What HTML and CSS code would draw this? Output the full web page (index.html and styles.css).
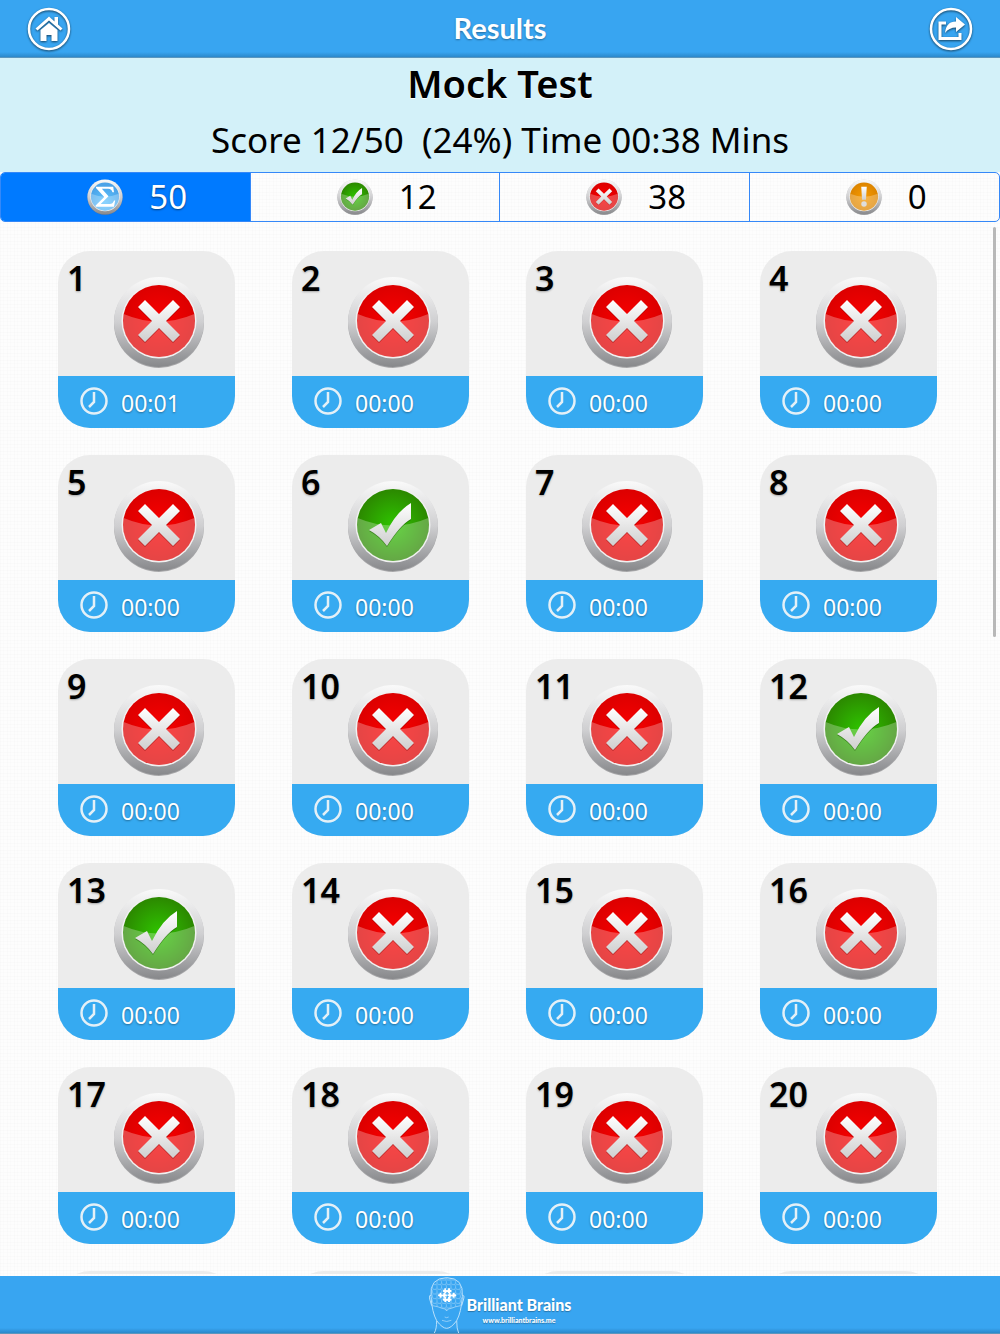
FILE: index.html
```html
<!DOCTYPE html>
<html lang="en">
<head>
    <meta charset="UTF-8">
    <meta name="viewport" content="width=device-width, initial-scale=1">
    <title>Results</title>
    <link rel="stylesheet" href="styles.css">
    <script src="results.js" defer></script>
</head>
<body>
    <!-- shared icons -->
    <svg class="defs" width="0" height="0" aria-hidden="true">
        <defs>
            <linearGradient id="ring" x1="0" y1="0" x2="0" y2="1">
                <stop offset="0" stop-color="#fafafa"/>
                <stop offset=".5" stop-color="#cfcfd1"/>
                <stop offset="1" stop-color="#87888b"/>
            </linearGradient>
            <linearGradient id="mark" x1="0" y1="0" x2="0" y2="1">
                <stop offset="0" stop-color="#ffffff"/>
                <stop offset="1" stop-color="#cfcfcf"/>
            </linearGradient>
            <radialGradient id="redTop" cx=".5" cy=".5" r=".55">
                <stop offset="0" stop-color="#fa0000"/>
                <stop offset="1" stop-color="#d90000"/>
            </radialGradient>
            <radialGradient id="greenTop" cx=".5" cy=".5" r=".55">
                <stop offset="0" stop-color="#2fc400"/>
                <stop offset="1" stop-color="#2b8200"/>
            </radialGradient>
            <radialGradient id="orangeTop" cx=".5" cy=".5" r=".55">
                <stop offset="0" stop-color="#f79a00"/>
                <stop offset="1" stop-color="#d98200"/>
            </radialGradient>
            <radialGradient id="blueTop" cx=".5" cy=".7" r=".6">
                <stop offset="0" stop-color="#5fc4ff"/>
                <stop offset="1" stop-color="#4ba3e8"/>
            </radialGradient>
        </defs>
        <symbol id="base" viewBox="0 0 92 92">
            <circle cx="46" cy="47" r="45" fill="#6d6e71" opacity=".55"/>
            <circle cx="46" cy="46" r="45" fill="url(#ring)"/>
            <circle cx="46" cy="45" r="37.500" fill="#f1f1f1"/>
        </symbol>
        <symbol id="gloss" viewBox="0 0 92 92">
            <path d="M10.700 38Q46 53 81.300 38A36 36 0 1 1 10.700 38Z" fill="#fff" opacity=".27"/>
        </symbol>
        <symbol id="wrong" viewBox="0 0 92 92">
            <use href="#base"/>
            <circle cx="46" cy="45" r="36" fill="url(#redTop)"/>
            <use href="#gloss"/>
            <path d="M32 24L46 38L60 24L67 31L53 45L67 59L60 66L46 52L32 66L25 59L39 45L25 31Z" fill="#700" opacity=".45" transform="translate(0 1)"/>
            <path d="M32 24L46 38L60 24L67 31L53 45L67 59L60 66L46 52L32 66L25 59L39 45L25 31Z" fill="url(#mark)"/>
        </symbol>
        <symbol id="right" viewBox="0 0 92 92">
            <use href="#base"/>
            <circle cx="46" cy="45" r="36" fill="url(#greenTop)"/>
            <use href="#gloss"/>
            <path d="M22 50L34 43L39 53Q49 32 64 23V39Q53 45 40 66Q33 56 22 50Z" fill="#174d00" opacity=".5" transform="translate(0 1)"/>
            <path d="M22 50L34 43L39 53Q49 32 64 23V39Q53 45 40 66Q33 56 22 50Z" fill="url(#mark)"/>
        </symbol>
        <symbol id="skipped" viewBox="0 0 92 92">
            <use href="#base"/>
            <circle cx="46" cy="45" r="36" fill="url(#orangeTop)"/>
            <use href="#gloss"/>
            <path d="M39 20H53L51 53H41Z" fill="url(#mark)"/>
            <circle cx="46" cy="64" r="7" fill="#dedede"/>
        </symbol>
        <symbol id="total" viewBox="0 0 92 92">
            <use href="#base"/>
            <circle cx="46" cy="45" r="36" fill="url(#blueTop)"/>
            <use href="#gloss"/>
            <path d="M23 20H67L69 34H65Q63 25 54 25H38L55 44L35 64H58Q66 64 69 55H72L69 71H22V68L44 46L23 23Z" fill="#fff"/>
        </symbol>
        <symbol id="clock" viewBox="0 0 28 28">
            <circle cx="14" cy="14" r="12.500" fill="none" stroke="#e4f0f7" stroke-width="2.500"/>
            <path d="M14 5V15L9 20" fill="none" stroke="#e4f0f7" stroke-width="2.500"/>
        </symbol>
    </svg>

    <header class="bar">
        <button class="bar-btn" type="button" aria-label="Home">
            <svg viewBox="0 0 44 44" width="44" height="44">
                <circle cx="22" cy="22" r="20" fill="none" stroke="#fff" stroke-width="2.500"/>
                <path d="M22 9.500L27.500 14.500V10H31V17.500L35.500 21.500L33.500 23.500L22 13.500L10.500 23.500L8.500 21.500Z" fill="#fff"/>
                <path d="M22 16L30.500 23V34H24.500V28H19.500V34H13.500V23Z" fill="#fff"/>
            </svg>
        </button>
        <h1 class="bar-title">Results</h1>
        <button class="bar-btn" type="button" aria-label="Share">
            <svg viewBox="0 0 44 44" width="44" height="44">
                <circle cx="22" cy="22" r="20" fill="none" stroke="#fff" stroke-width="2.500"/>
                <path d="M17 16H11V31.500H31V26" fill="none" stroke="#fff" stroke-width="3"/>
                <path d="M16 26Q17 14.500 27 14.500V10L36 17.500L27 25V20.500Q20 20.500 16 26Z" fill="#fff"/>
            </svg>
        </button>
    </header>

    <section class="summary">
        <h2 class="test-name">Mock Test</h2>
        <p class="score">Score 12/50 &nbsp;(24%) Time 00:38 Mins</p>
    </section>

    <nav class="tabs">
        <button class="tab active" type="button"><svg class="tab-icon" role="img" aria-label="All"><use href="#total"/></svg>50</button>
        <button class="tab" type="button"><svg class="tab-icon" role="img" aria-label="Correct"><use href="#right"/></svg>12</button>
        <button class="tab" type="button"><svg class="tab-icon" role="img" aria-label="Wrong"><use href="#wrong"/></svg>38</button>
        <button class="tab" type="button"><svg class="tab-icon" role="img" aria-label="Skipped"><use href="#skipped"/></svg>0</button>
    </nav>

    <main class="list">
        <div class="grid" id="grid"></div>
        <div class="thumb"></div>
    </main>

    <footer class="bar footer">
        <svg class="head" viewBox="81 51 108 171" aria-hidden="true">
            <defs>
                <pattern id="mesh" width="14" height="14" patternUnits="userSpaceOnUse">
                    <path d="M0 7H4Q5 3 7 3T10 7H14M7 0V3M7 14V10Q4 9 5 7" fill="none" stroke="#c9e8fd" stroke-width="1.500"/>
                </pattern>
            </defs>
            <path d="M90 138Q84 116 87 98Q94 57 134 56Q174 57 181 98Q184 116 178 138Q162 141 152 146Q140 148 134 156Q128 148 116 146Q106 141 90 138Z" fill="url(#mesh)" opacity=".8"/>
            <g fill="none" stroke="#b9e0fb" stroke-width="3">
                <path d="M87 112Q82 57 134 56Q186 57 181 112Q178 160 164 185Q147 208 134 208Q121 208 104 185Q90 160 87 112Z"/>
                <path d="M87 110Q80 106 83 120L89 140M181 110Q188 106 185 120L179 140"/>
                <path d="M92 140Q110 143 120 148Q132 148 134 156Q136 148 148 148Q158 143 176 140" stroke-width="2"/>
                <path d="M104 185Q104 210 97 222M164 185Q164 210 170 222"/>
                <path d="M120 184Q134 191 148 184M128 174Q134 178 140 174" stroke-width="2"/>
            </g>
            <g fill="#fff">
                <path id="piece" d="M127 88H132Q130 94 135 94T138 88H144V93Q149 92 149 96T144 99V103H138Q139 99 135 99T132 103H127V99Q122 100 122 96T127 93Z"/>
                <use href="#piece" y="26"/>
                <use href="#piece" x="-14" y="13"/>
                <use href="#piece" x="14" y="13"/>
            </g>
        </svg>
        <a class="brand" href="#">
            <span class="brand-name">Brilliant Brains</span>
            <span class="brand-url">www.brilliantbrains.me</span>
        </a>
    </footer>
</body>
</html>
```

FILE: styles.css
```css
*{
    box-sizing: border-box;
}
body{
    margin: 0;
    height: 100vh;
    display: flex;
    flex-direction: column;
    font-family: "Noto Sans", "Open Sans", sans-serif;
    color: #000;
    /* light linen texture */
    background-color: #fdfdfd;
    background-image:
        repeating-linear-gradient(90deg, rgba(0,0,0,0.012) 0 1px, transparent 1px 3px, rgba(0,0,0,0.008) 3px 4px, transparent 4px 7px),
        repeating-linear-gradient(0deg, rgba(0,0,0,0.012) 0 1px, transparent 1px 4px, rgba(0,0,0,0.008) 4px 5px, transparent 5px 7px);
}
button{
    font-family: inherit;
    cursor: pointer;
}
.defs{
    position: absolute;
}

/* top and bottom bars */
.bar{
    flex: none;
    display: flex;
    align-items: center;
    justify-content: space-between;
    height: 58px;
    padding: 0 27px;
    color: #fff;
    background: linear-gradient(#38a5f1 0, #38a5f1 52px, #2b88ca 57px, #8aa5b2 58px);
}
.bar-title{
    margin: 0;
    padding-bottom: 2px;
    font: bold 29px/56px Lato, sans-serif;
    text-shadow: 0 1px 2px rgba(0,0,0,0.35);
}
.bar-btn{
    width: 44px;
    height: 44px;
    padding: 0;
    border: 0;
    background: none;
}
.bar-btn svg{
    display: block;
    filter: drop-shadow(0 1px 1px rgba(0,0,0,0.6));
}

.summary{
    flex: none;
    height: 114px;
    text-align: center;
    background: #d3f1f9;
}
.test-name{
    margin: 0;
    font-size: 38px;
    font-weight: 600;
    line-height: 50px;
    text-shadow: 0 1px 1px #fff;
}
.score{
    margin: 0;
    font-size: 35px;
    line-height: 64px;
}

.tabs{
    flex: none;
    display: grid;
    grid-template-columns: repeat(4, 1fr);
    height: 50px;
    border: 1px solid #3588f8;
    border-radius: 5px;
    overflow: hidden;
}
.tab{
    display: flex;
    align-items: center;
    justify-content: center;
    gap: 26px;
    padding: 0 0 0 24px;
    border: 0;
    border-right: 1px solid #3588f8;
    background: none;
    color: #000;
    font-size: 33px;
    line-height: 46px;
}
.tab:last-child{
    border-right: 0;
}
.tab.active{
    background: #007aff;
    color: #fff;
    text-shadow: 0 1px 2px rgba(0,0,0,0.5);
}
.tab-icon{
    width: 36px;
    height: 36px;
}

/* question cards */
.list{
    position: relative;
    flex: 1;
    min-height: 0;
    margin-bottom: 2px;
    overflow: hidden;
}
.grid{
    display: grid;
    grid-template-columns: repeat(4, 1fr);
    gap: 27px 57px;
    padding: 29px 63px 0 58px;
}
.card{
    min-height: 177px;
    border-radius: 32px;
    overflow: hidden;
    background: #ececec;
}
.card-top{
    display: flex;
    align-items: flex-start;
    justify-content: space-between;
    height: 125px;
    padding: 9px 30px 0 9px;
}
.num{
    font-size: 34px;
    font-weight: 600;
    line-height: 36px;
    text-shadow: 0 1px 2px rgba(0,0,0,0.3);
}
.mark{
    flex: none;
    width: 92px;
    height: 92px;
    margin-top: 16px;
}
.time{
    display: flex;
    align-items: flex-start;
    gap: 13px;
    height: 52px;
    padding-left: 22px;
    background: #36aaf1;
    color: #fff;
    font-size: 23px;
    line-height: 54px;
    text-shadow: 0 1px 2px rgba(0,0,0,0.35);
}
.clock{
    width: 28px;
    height: 28px;
    margin-top: 11px;
}
.thumb{
    position: absolute;
    top: 5px;
    right: 4px;
    width: 3px;
    height: 39%;
    border-radius: 2px;
    background: #b8b8b8;
}

.footer{
    justify-content: center;
    align-items: flex-start;
    gap: 2px;
}
.head{
    width: 36px;
    height: 57px;
}
.brand{
    display: flex;
    flex-direction: column;
    align-items: center;
    padding-top: 19px;
    color: #fff;
    font-family: Lato, sans-serif;
    text-decoration: none;
    text-shadow: 0 1px 1px rgba(0,0,0,0.3);
}
.brand-name{
    font-size: 16px;
    font-weight: 900;
    line-height: 20px;
}
.brand-url{
    font-size: 7px;
    font-weight: 900;
    line-height: 10px;
}
```

FILE: results.js
```js
var grid = document.getElementById('grid');
var correct = [6, 12, 13];
var loaded = 20;
var columns = 4;

for (var i = 1; i <= loaded; i++) {
    var isRight = correct.indexOf(i) !== -1;
    var time = i === 1 ? '00:01' : '00:00';
    var card = document.createElement('article');
    card.className = 'card';
    card.innerHTML =
        '<div class="card-top">' +
            '<span class="num">' + i + '</span>' +
            '<svg class="mark" role="img" aria-label="' + (isRight ? 'Correct' : 'Wrong') + '">' +
                '<use href="#' + (isRight ? 'right' : 'wrong') + '"/></svg>' +
        '</div>' +
        '<div class="time"><svg class="clock" aria-hidden="true"><use href="#clock"/></svg>' + time + '</div>';
    grid.appendChild(card);
}

for (var j = 0; j < columns; j++) {
    var blank = document.createElement('article');
    blank.className = 'card';
    grid.appendChild(blank);
}
```
